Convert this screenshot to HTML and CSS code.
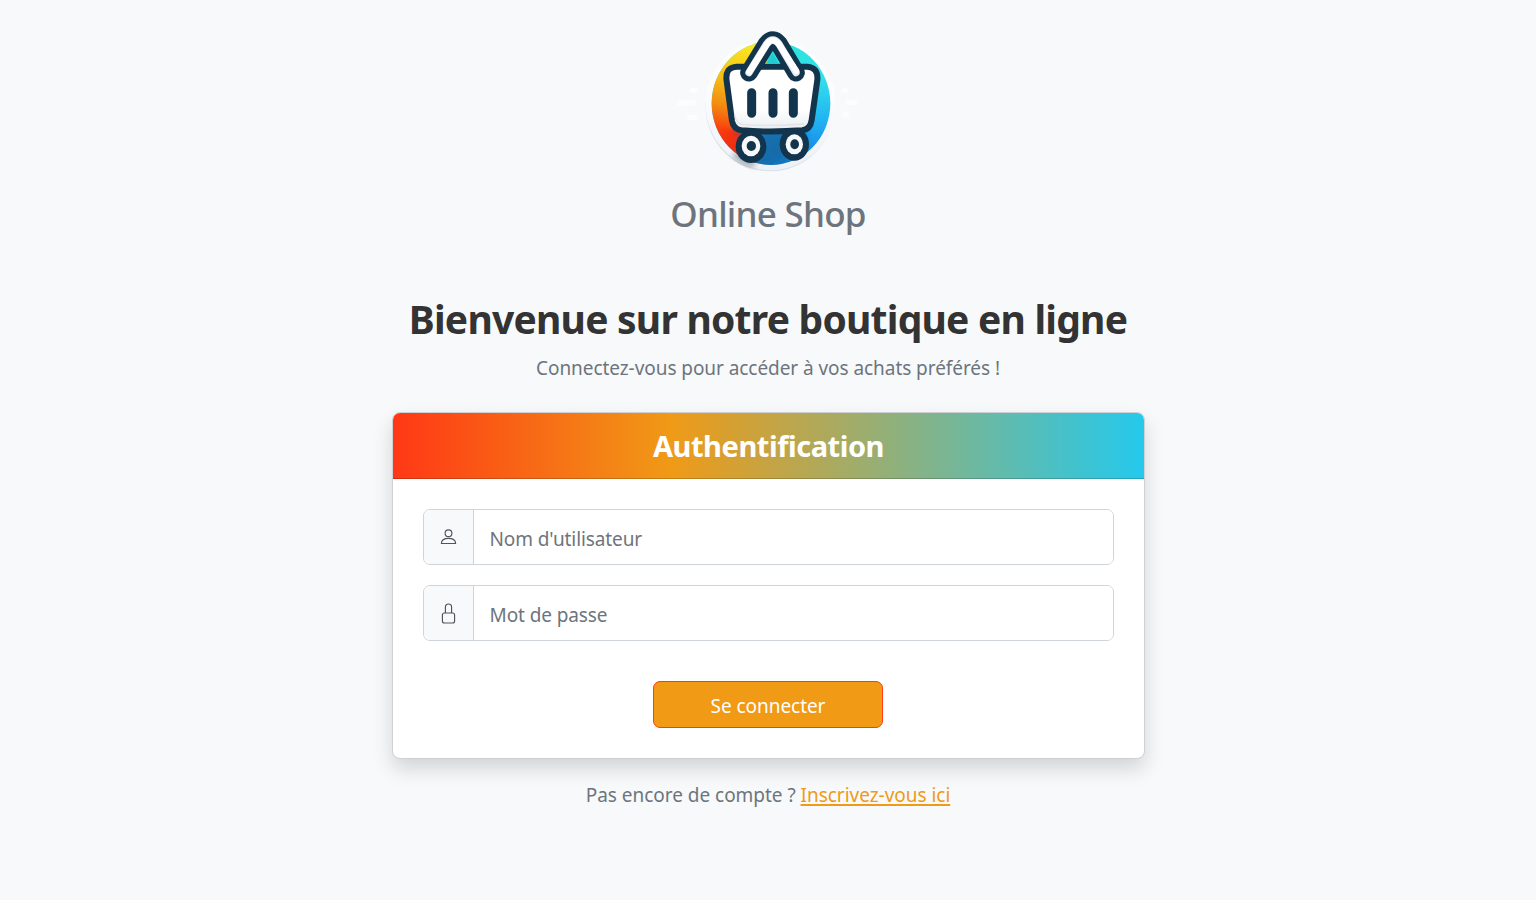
FILE: index.html
```html
<!DOCTYPE html>
<html lang="fr">
<head>
<meta charset="utf-8">
<title>Online Shop</title>
<link rel="stylesheet" href="styles.css">
</head>
<body>
<header class="brand">
  <svg class="logo" viewBox="0 0 600 480" aria-hidden="true">
    <defs>
      <linearGradient id="warm" x1=".35" y1="0" x2=".25" y2="1">
        <stop offset="0" stop-color="#fbe822"/><stop offset=".3" stop-color="#f6bd14"/><stop offset=".52" stop-color="#f28a12"/><stop offset=".72" stop-color="#fb3a0c"/><stop offset="1" stop-color="#e02a14"/>
      </linearGradient>
      <linearGradient id="cool" x1="0" y1="0" x2="0" y2="1">
        <stop offset="0" stop-color="#28e5dc"/><stop offset=".3" stop-color="#35dfea"/><stop offset=".6" stop-color="#22b8f2"/><stop offset=".82" stop-color="#1995ec"/><stop offset="1" stop-color="#1473b8"/>
      </linearGradient>
      <linearGradient id="basket" x1="0" y1="0" x2="0" y2="1">
        <stop offset=".65" stop-color="#fff"/><stop offset="1" stop-color="#e9ebef"/>
      </linearGradient>
      <linearGradient id="rim" x1="0" y1="0" x2="0" y2="1">
        <stop offset=".4" stop-color="#fdfdfe"/><stop offset="1" stop-color="#edf0f4"/>
      </linearGradient>
      <clipPath id="disc"><ellipse cx="309" cy="250" rx="178" ry="185"/></clipPath>
      <filter id="soft"><feGaussianBlur stdDeviation="8"/></filter>
    </defs>
    <ellipse cx="306" cy="260" rx="193" ry="194" fill="#d5dfee"/>
    <ellipse cx="308" cy="254" rx="195" ry="197" fill="url(#rim)"/>
    <ellipse cx="228" cy="420" rx="38" ry="14" transform="rotate(28 228 420)" fill="#7f8790" opacity=".6" filter="url(#soft)"/>
    <g clip-path="url(#disc)">
      <rect x="125" y="60" width="370" height="380" fill="url(#cool)"/>
      <path d="M100 60h198v100l-30 170-4 110H100z" fill="url(#warm)"/>
      <path d="M195 330h220v45q-45 48-150 65z" fill="#12629c" opacity=".6" filter="url(#soft)"/>
      <path d="M170 330h70v90h-50z" fill="#ed2b12" opacity=".5" filter="url(#soft)"/>
    </g>
    <path d="M286 342h62l-8 65-46 8z" fill="#176aa6" opacity=".7" filter="url(#soft)"/>
    <path d="M207 140H418Q451 142 448 180L431 300Q427 328 403 331Q305 338 220 331Q197 328 192 303L176 183Q170 142 207 140Z" fill="url(#basket)" stroke="#12344d" stroke-width="18" stroke-linejoin="round"/>
    <path d="M199 285q6 25 24 28 88 7 185-1" fill="none" stroke="#d5d8dd" stroke-width="4" opacity=".55"/>
    <path d="M243 158L296 72Q314 48 333 72L384 158" fill="none" stroke="#12344d" stroke-width="53" stroke-linecap="round" stroke-linejoin="round"/>
    <path d="M293 132L314 100L333 132Z" fill="#22cbd0"/>
    <path d="M243 158L296 72Q314 48 333 72L384 158" fill="none" stroke="#e5e7ee" stroke-width="22" stroke-linecap="round" stroke-linejoin="round"/>
    <path d="M244 155L298 71Q314 51 331 70L385 153" fill="none" stroke="#fff" stroke-width="18" stroke-linecap="round" stroke-linejoin="round"/>
    <path d="M251 218v62M315 218v62M376 218v62" stroke="#12344d" stroke-width="27" stroke-linecap="round"/>
    <g fill="#12344d">
      <ellipse cx="249" cy="380" rx="46" ry="49"/><ellipse cx="379" cy="373" rx="44" ry="49"/>
    </g>
    <g fill="#f7f8f9">
      <ellipse cx="249" cy="378" rx="28" ry="31"/><ellipse cx="379" cy="373" rx="26" ry="30"/>
    </g>
    <g fill="#12344d">
      <ellipse cx="250" cy="378" rx="14" ry="15"/><ellipse cx="380" cy="373" rx="13" ry="15"/>
    </g>
    <path d="M73 211h10M35 249h40M65 292h15M528 211h4M539 247h20M528 285h8" stroke="#fff" stroke-width="16" stroke-linecap="round" opacity=".7"/>
  </svg>
  <h3 class="brand-name">Online Shop</h3>
</header>
<main class="login">
  <h1 class="title">Bienvenue sur notre boutique en ligne</h1>
  <p class="lead">Connectez-vous pour accéder à vos achats préférés !</p>
  <section class="card">
    <h2 class="card-header">Authentification</h2>
    <form class="card-body">
      <div class="field">
        <span class="addon"><svg width="18" height="18" viewBox="0 0 18 18"><circle cx="8.5" cy="5.2" r="3.4"/><path d="M1.4 15.5C1.4 12 4.6 10.4 8.5 10.4s7.1 1.6 7.1 5.1z"/></svg></span>
        <input class="input" type="text" placeholder="Nom d'utilisateur">
      </div>
      <div class="field">
        <span class="addon"><svg width="18" height="22" viewBox="0 0 18 22"><rect x="2.4" y="11" width="12.2" height="10" rx="2"/><path d="M5.4 11V5.2C5.4 3.2 6.6 2 8.5 2s3.1 1.2 3.1 3.2V11"/></svg></span>
        <input class="input" type="password" placeholder="Mot de passe">
      </div>
      <button class="submit" type="button">Se connecter</button>
    </form>
  </section>
  <p class="signup"><span>Pas encore de compte ?</span> <a href="#">Inscrivez-vous ici</a></p>
</main>
</body>
</html>
```
FILE: styles.css
```css
* { box-sizing: border-box; }
body {
  margin: 0;
  min-height: 900px;
  background: #f8f9fb;
  color: #6c757d;
  font: 400 19px/30px "Segoe UI", "Noto Sans", "Open Sans", sans-serif;
}
h1, h2, h3, p { margin: 0; }
.brand { display: flex; flex-direction: column; align-items: center; padding-top: 20px; }
.logo { width: 200px; height: 160px; display: block; }
.brand-name { margin-top: 12px; font-size: 35px; line-height: 43px; font-weight: 500; letter-spacing: -0.75px; }
.login { width: 752px; margin: 60px auto 0; text-align: center; }
.title { color: #333; font-size: 39px; line-height: 48px; font-weight: 700; white-space: nowrap; letter-spacing: -0.77px; }
.lead { margin-top: 10px; letter-spacing: -0.06px; }
.card {
  width: 753px;
  margin-top: 29px;
  height: 347px;
  background: #fff;
  border: 1px solid #ced0d3;
  border-radius: 8px;
  box-shadow: 0 10px 20px rgba(0, 0, 0, .15);
  overflow: hidden;
}
.card-header {
  height: 66px;
  border-bottom: 1px solid rgba(0, 0, 0, .18);
  background: linear-gradient(90deg, #ff3815, #f09a16 37%, #24c9ed);
  background-origin: border-box;
  color: #fff;
  font-size: 29px;
  line-height: 66px;
  font-weight: 700;
  letter-spacing: -0.45px;
}
.card-body { display: flex; flex-direction: column; gap: 20px; padding: 30px; }
.field { display: flex; height: 56px; border: 1px solid #ced4da; border-radius: 7px; overflow: hidden; }
.addon { width: 50px; display: flex; align-items: center; justify-content: center; background: #f8f9fb; border-right: 1px solid #ced4da; }
.addon svg { fill: none; stroke: #50545d; stroke-width: 1.15; }
.input { flex: 1; min-width: 0; border: 0; padding: 4px 16px 0 15.5px; font: inherit; letter-spacing: -0.1px; background: #fff; outline: 0; }
.input::placeholder { color: #6c757d; opacity: 1; }
.submit {
  align-self: center;
  width: 230px;
  height: 47px;
  margin: 20px 1px 0 0;
  padding: 2px 0 0;
  border: 1px solid #ff3b16;
  border-radius: 7px;
  background: #f09a16;
  color: #fff;
  font: inherit;
  letter-spacing: -0.05px;
}
.signup { margin-top: 21px; letter-spacing: -0.03px; }
.signup a { color: #f09a16; text-decoration-thickness: 2px; text-underline-offset: 2px; }
```
